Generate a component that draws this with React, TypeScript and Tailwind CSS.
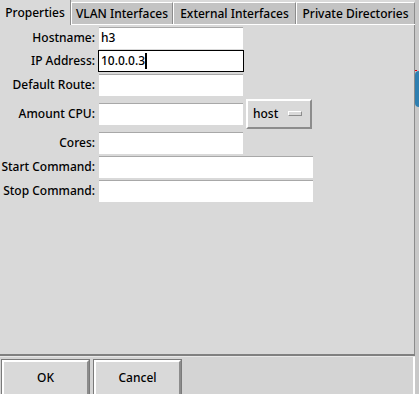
import React from "react";

const font = { fontFamily: '"Noto Sans", "Open Sans", sans-serif' };

function Entry({ w, value, focus }: { w: number; value?: string; focus?: boolean }) {
  return (
    <div
      className={
        "h-[22px] bg-white flex items-center text-[12px] font-medium text-black " +
        (focus ? "border border-black pl-[2px]" : "border-t border-t-[#a8a8a8] pl-[2px]")
      }
      style={{ width: w }}
    >
      {value}
      {focus && <span className="inline-block w-[2px] h-[16px] bg-black ml-[0px]" />}
    </div>
  );
}

function Row({ h, label, children }: { h: number; label: string; children: React.ReactNode }) {
  return (
    <div className="flex items-center" style={{ height: h }}>
      <div className="w-[96px] text-right text-[12px] font-medium text-black pr-[1px] leading-none">{label}</div>
      <div className="ml-[3px] flex items-center gap-[3px]">{children}</div>
    </div>
  );
}

export default function App() {
  const tabs = ["VLAN Interfaces", "External Interfaces", "Private Directories"];
  const widths = [102, 123, 119];
  return (
    <div className="w-[419px] h-[394px] bg-[#d9d9d9] flex overflow-hidden" style={font}>
      <div className="w-[415px] flex flex-col">
        {/* tabs */}
        <div className="h-[25px] flex">
          <div className="w-[71px] h-[25px] bg-[#d9d9d9] flex items-center justify-center text-[12px] font-medium text-black border-r border-r-[#8c8c8c]">
            Properties
          </div>
          {tabs.map((t, i) => (
            <div key={t} className="flex flex-col" style={{ width: widths[i] }}>
              <div className="h-[2px] bg-[#d9d9d9]" />
              <div className="flex-1 bg-[#c3c3c3] border-l border-l-white border-t border-t-white border-r border-r-[#8c8c8c] flex items-center justify-center text-[12px] font-medium text-black">
                {t}
              </div>
              <div className="h-[1px] bg-white" />
            </div>
          ))}
        </div>
        {/* body */}
        <div className="flex-1 border-r border-r-[#8c8c8c] flex flex-col pt-[1px]">
          <Row h={23} label="Hostname:">
            <Entry w={144} value="h3" />
          </Row>
          <Row h={24} label="IP Address:">
            <div className="-ml-[1px]">
              <Entry w={146} value="10.0.0.3" focus />
            </div>
          </Row>
          <Row h={24} label="Default Route:">
            <Entry w={144} />
          </Row>
          <Row h={33} label="Amount CPU:">
            <Entry w={144} />
            <div className="w-[66px] h-[30px] border-2 border-t-white border-l-white border-r-[#8c8c8c] border-b-[#8c8c8c] bg-[#d9d9d9] flex items-center text-[12px] font-medium text-black pl-[5px]">
              <span>host</span>
              <span className="ml-[10px] w-[14px] h-[5px] border border-t-white border-l-white border-r-[#8c8c8c] border-b-[#8c8c8c] bg-[#d9d9d9]" />
            </div>
          </Row>
          <Row h={25} label="Cores:">
            <Entry w={144} />
          </Row>
          <Row h={24} label="Start Command:">
            <Entry w={214} />
          </Row>
          <Row h={24} label="Stop Command:">
            <Entry w={214} />
          </Row>
        </div>
        {/* separator */}
        <div className="h-[2px] bg-[#808080]" />
        <div className="h-[1px] bg-[#e8e8e8]" />
        {/* bottom */}
        <div className="h-[37px] bg-[#d4d4d4] flex gap-[3px] pl-[1px] pt-[2px] border-r-2 border-r-white">
          {["OK", "Cancel"].map((b) => (
            <div key={b} className="w-[89px] h-[40px] border border-[#7a7a7a]">
              <div className="w-full h-full border-2 border-t-white border-l-white border-r-[#8c8c8c] border-b-[#8c8c8c] bg-[#d9d9d9] flex items-center justify-center text-[12px] font-medium text-black pb-[3px]">
                {b}
              </div>
            </div>
          ))}
        </div>
      </div>
      <div className="w-[4px] flex flex-col bg-[#c8c8c8]">
        <div className="h-[70px]" />
        <div className="h-[1px] w-[2px] bg-red-600" />
        <div className="h-[36px] bg-[#2f7fb0] rounded-l-full" />
      </div>
    </div>
  );
}
